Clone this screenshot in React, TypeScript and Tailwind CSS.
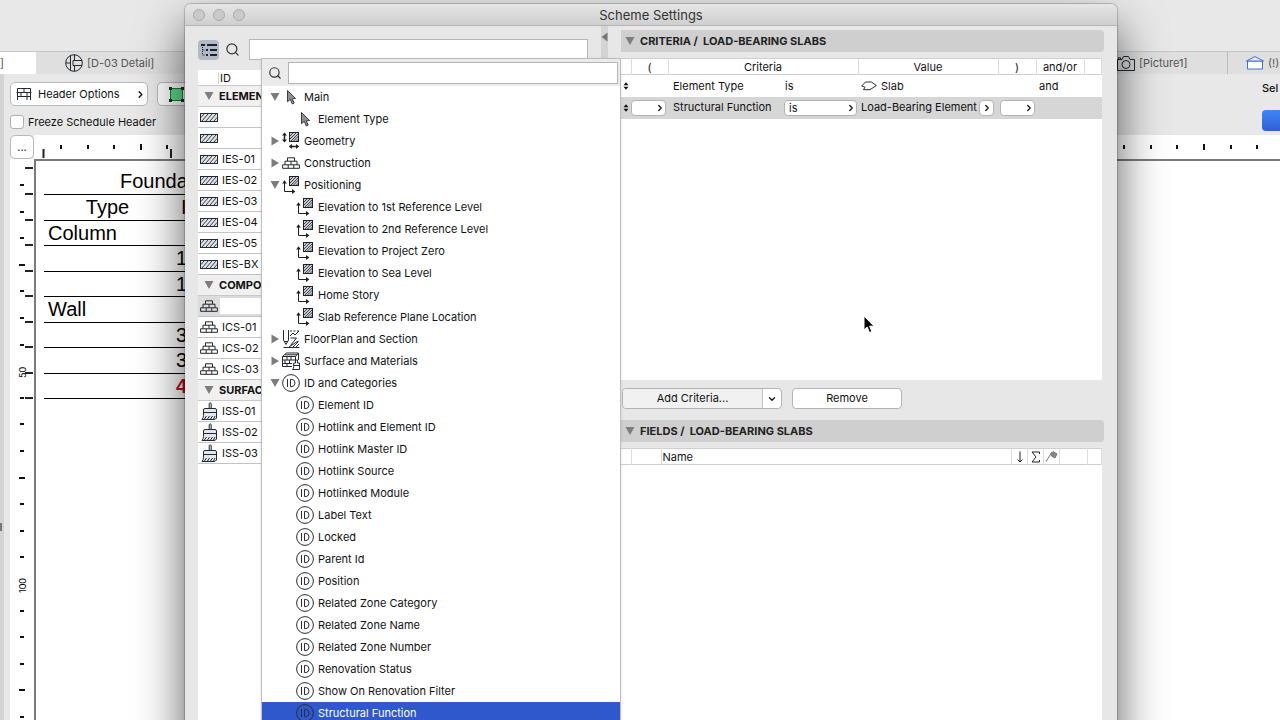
import type { ReactNode } from 'react';
import { ChevronDown, ChevronRight, Search } from 'lucide-react';

type IconName = 'cursor' | 'geometry' | 'bricks' | 'position' | 'section' | 'surface' | 'id';

type TreeNode = { label: string; icon: IconName; level: 0 | 1; open?: boolean; selected?: boolean };

const TREE: TreeNode[] = [
  { label: 'Main', icon: 'cursor', level: 0, open: true },
  { label: 'Element Type', icon: 'cursor', level: 1 },
  { label: 'Geometry', icon: 'geometry', level: 0, open: false },
  { label: 'Construction', icon: 'bricks', level: 0, open: false },
  { label: 'Positioning', icon: 'position', level: 0, open: true },
  { label: 'Elevation to 1st Reference Level', icon: 'position', level: 1 },
  { label: 'Elevation to 2nd Reference Level', icon: 'position', level: 1 },
  { label: 'Elevation to Project Zero', icon: 'position', level: 1 },
  { label: 'Elevation to Sea Level', icon: 'position', level: 1 },
  { label: 'Home Story', icon: 'position', level: 1 },
  { label: 'Slab Reference Plane Location', icon: 'position', level: 1 },
  { label: 'FloorPlan and Section', icon: 'section', level: 0, open: false },
  { label: 'Surface and Materials', icon: 'surface', level: 0, open: false },
  { label: 'ID and Categories', icon: 'id', level: 0, open: true },
  { label: 'Element ID', icon: 'id', level: 1 },
  { label: 'Hotlink and Element ID', icon: 'id', level: 1 },
  { label: 'Hotlink Master ID', icon: 'id', level: 1 },
  { label: 'Hotlink Source', icon: 'id', level: 1 },
  { label: 'Hotlinked Module', icon: 'id', level: 1 },
  { label: 'Label Text', icon: 'id', level: 1 },
  { label: 'Locked', icon: 'id', level: 1 },
  { label: 'Parent Id', icon: 'id', level: 1 },
  { label: 'Position', icon: 'id', level: 1 },
  { label: 'Related Zone Category', icon: 'id', level: 1 },
  { label: 'Related Zone Name', icon: 'id', level: 1 },
  { label: 'Related Zone Number', icon: 'id', level: 1 },
  { label: 'Renovation Status', icon: 'id', level: 1 },
  { label: 'Show On Renovation Filter', icon: 'id', level: 1 },
  { label: 'Structural Function', icon: 'id', level: 1, selected: true },
];

const SCHEMES = [
  { title: 'ELEMENTS', kind: 'hatch', rows: ['', '', 'IES-01', 'IES-02', 'IES-03', 'IES-04', 'IES-05', 'IES-BX'] },
  { title: 'COMPONENTS', kind: 'bricks', rows: ['', 'ICS-01', 'ICS-02', 'ICS-03'] },
  { title: 'SURFACES', kind: 'brush', rows: ['ISS-01', 'ISS-02', 'ISS-03'] },
];

const SCHEDULE = [
  { type: 'Column', value: '' },
  { type: '', value: '1' },
  { type: '', value: '1' },
  { type: 'Wall', value: '' },
  { type: '', value: '3' },
  { type: '', value: '3' },
  { type: '', value: '4', alert: true },
];

/* ---------- icons ---------- */

function Triangle({ open }: { open: boolean }) {
  return (
    <svg width="10" height="10" viewBox="0 0 10 10" fill="#7d7d7d" className="shrink-0">
      {open ? <path d="M0.5 1h9L5 9z" /> : <path d="M1.5 0.5v9L9 5z" />}
    </svg>
  );
}

function HatchIcon() {
  return (
    <svg width="18" height="9" viewBox="0 0 18 9" fill="#dfe3ea" stroke="#23272e" className="shrink-0">
      <rect x="0.5" y="0.5" width="17" height="8" />
      <path d="M2 8l6-7M6 8l6-7M10 8l6-7M1 4.500L4 1M14 8l3-3.500" strokeWidth="0.9" />
    </svg>
  );
}

function BricksIcon() {
  return (
    <svg width="18" height="12" viewBox="0 0 18 12" fill="none" stroke="#23272e" className="shrink-0">
      <path d="M5.5 4V0.8h7V4M3 7.7V4.2h12v3.5M0.6 11.3V7.8h16.8v3.5zM9 4.2v3.5M6.2 7.8v3.5M11.8 7.8v3.5" />
    </svg>
  );
}

function BrushIcon() {
  return (
    <svg width="17" height="18" viewBox="0 0 17 18" fill="#e3e6ec" stroke="#23272e" className="shrink-0">
      <path d="M8.2 6.5V1.5q1-1.4 2 0v5" />
      <path d="M2.5 9V8q0-1.5 1.5-1.5h10Q15.5 6.5 15.5 8v8q-1 1.500-2.500 1.500H1q1.500-1.500 1.500-4zM2.500 10.500h13" />
      <path d="M3.500 17l2-3M6.500 17l2-3M9.500 17l2-3M12.500 17l1.500-3" />
    </svg>
  );
}

function TreeIcon({ name }: { name: IconName }) {
  if (name === 'bricks') return <BricksIcon />;
  if (name === 'id') {
    return (
      <svg width="18" height="18" viewBox="0 0 18 18" fill="none" stroke="#2b2e36" className="shrink-0">
        <circle cx="9" cy="9" r="8.4" />
        <path d="M5.500 5v8M8.500 5.400v7.200h1.500q3-.4 3-3.600t-3-3.600z" />
      </svg>
    );
  }
  if (name === 'cursor') {
    return (
      <svg width="18" height="18" viewBox="0 0 18 18" fill="#8d8f93" stroke="#3a3d42" className="shrink-0">
        <path d="M5.500 2.500v11.200l2.800-2.300 2 4.600 1.900-.9-2-4.300 3.400-.3z" />
      </svg>
    );
  }
  if (name === 'geometry') {
    return (
      <svg width="18" height="18" viewBox="0 0 18 18" fill="none" stroke="#1c1f24" className="shrink-0">
        <rect x="7.500" y="0.500" width="9" height="9" fill="#c9ccd2" />
        <path d="M8 4l3-3M8 7l6-6M8.500 9.500l8-8M11 9.500l5.500-5.500M14 9.500l2.500-2.500" strokeWidth="0.8" />
        <path d="M2.500 2v7" strokeWidth="1.500" />
        <path d="M8 14.500h8" strokeWidth="1.500" />
        <path d="M0 3.500l2.500-3 2.500 3zM0 7.500l2.500 3 2.500-3zM10 12l-3.200 2.500 3.200 2.500zM14 12l3.200 2.500-3.200 2.500z" fill="#1c1f24" stroke="none" />
      </svg>
    );
  }
  if (name === 'position') {
    return (
      <svg width="18" height="18" viewBox="0 0 18 18" fill="none" stroke="#1c1f24" className="shrink-0">
        <rect x="7.500" y="0.500" width="9" height="9" fill="#c9ccd2" />
        <path d="M8 4l3-3M8 7l6-6M8.500 9.500l8-8M11 9.500l5.500-5.500M14 9.500l2.500-2.500" strokeWidth="0.8" />
        <path d="M2.500 6v9.500H11" />
        <path d="M0.200 7.500l2.300-3.200 2.300 3.200zM10 13l3.400 2.500L10 18z" fill="#1c1f24" stroke="none" />
      </svg>
    );
  }
  if (name === 'section') {
    return (
      <svg width="18" height="18" viewBox="0 0 18 18" fill="none" stroke="#23272e" className="shrink-0">
        <path d="M1.500 0v10l2.500 4.500 2.500-4.500V0M2 11.500h4" />
        <path d="M8 1h2M11.500 1h2M15 1h2M8 6l3-3 2 2 4-4M8.500 8h6l-6 7.500M1.500 17.500h16M7 17l9-6M11 17l5.500-5.500M14 17l3-3" />
      </svg>
    );
  }
  return (
    <svg width="18" height="18" viewBox="0 0 18 18" fill="none" stroke="#23272e" className="shrink-0">
      <path d="M0.500 4.500l4-3.500h12l-3 3.500zM0.500 4.500v10h9.500M13.500 4.500V8M16.500 1v7M0.500 8h13M0.500 11.500H10M5 4.500V8M9 4.500V8M3 8v3.500M7.500 8v3.500M5 11.500v3M3 2.800h12" />
      <path d="M13.500 11V8h2v3h2v6.500H10.500q1.200-1 1.200-3V11zM11.700 13.500h5.800" fill="#fff" />
    </svg>
  );
}

function SlabIcon() {
  return (
    <svg width="16" height="10" viewBox="0 0 16 10" fill="none" stroke="#2b2e36" className="shrink-0">
      <path d="M4.500 1h6l4.800 3.500L9 8.700H2.500L4 6.200.7 5z" />
    </svg>
  );
}

function DetailIcon() {
  return (
    <svg width="18" height="18" viewBox="0 0 18 18" fill="none" stroke="#23272e" className="shrink-0">
      <circle cx="9" cy="9" r="8.3" />
      <path d="M5.500 1.500v15M9.500 0.800v5.700M9.500 17.200v-5.700M17.200 6.500H8v5h9.200M1 9h4.500" />
    </svg>
  );
}

function CameraIcon() {
  return (
    <svg width="18" height="15" viewBox="0 0 18 15" fill="none" stroke="#23272e" className="shrink-0">
      <path d="M0.500 3.500h4.500l1.500-3h5l1.500 3h4.500v11H0.500z" />
      <circle cx="9" cy="8.500" r="4" />
      <path d="M1.500 3V1.800h2V3" />
    </svg>
  );
}

function HomeIcon() {
  return (
    <svg width="18" height="14" viewBox="0 0 18 14" fill="#fff" stroke="#3f6fd1" className="shrink-0">
      <path d="M1.500 5h15v8h-15z" />
      <path d="M0.500 5L9 0.600 17.500 5z" fill="#e8eefb" />
    </svg>
  );
}

function HeaderIcon() {
  return (
    <svg width="16" height="12" viewBox="0 0 16 12" fill="none" stroke="#23272e" className="shrink-0">
      <path d="M1.500 12V0.500h13V12M0.500 4.500h15M1.500 8.500h13M8 0.500v4M5 4.500v4M11 4.500V12" />
    </svg>
  );
}

function MarqueeIcon() {
  return (
    <svg width="15" height="15" viewBox="0 0 15 15" className="shrink-0">
      <rect x="1.500" y="1.500" width="12" height="12" fill="#5fdc8b" stroke="#1d7a3d" />
      <path d="M0 0h3v3H0zM12 0h3v3h-3zM0 12h3v3H0zM12 12h3v3h-3z" fill="#16331f" />
    </svg>
  );
}

function SchemeTreeIcon() {
  return (
    <svg width="18" height="16" viewBox="0 0 18 16" fill="none" stroke="#1b2233" className="shrink-0">
      <path d="M1 3h4M7 3h10M6 8h2M10 8h7M6 13h2M10 13h7" strokeWidth="2" />
      <path d="M2.500 5v8H5M2.500 8H5" strokeDasharray="1 1" />
    </svg>
  );
}

function SortHandle() {
  return (
    <svg width="6" height="8" viewBox="0 0 6 8" fill="#111" className="mx-auto">
      <path d="M0.500 3.200L3 0.300l2.500 2.900zM0.500 4.800L3 7.700l2.500-2.900z" />
    </svg>
  );
}

/* ---------- rulers ---------- */

function HorizontalRuler() {
  const ticks = Array.from({ length: 80 }, (_, k) => ({ x: Math.round(26 + k * 26.58), major: k % 5 === 3 }));
  return (
    <svg width="100%" height="24" className="block flex-1 bg-white">
      <path d="M9.500 14v9M137 14v9" stroke="#222" strokeWidth="2" />
      {ticks.map((t) => (
        <rect key={t.x} x={t.x} y={t.major ? 9 : 10} width="2" height={t.major ? 6 : 4} fill="#111" />
      ))}
    </svg>
  );
}

function VerticalRuler() {
  const ticks = Array.from({ length: 40 }, (_, k) => ({ k, y: Math.round(25 + k * 26.6) }));
  const majors = [3, 11, 19, 27];
  const labelled = [7, 15];
  return (
    <svg width="24" height="100%" className="block h-full shrink-0 bg-white">
      {[8, 34, 60, 85, 111, 136, 162, 187, 213, 238].map((y) => (
        <rect key={y} x="15" y={y} width="8" height="2" fill="#222" />
      ))}
      {ticks
        .filter((t) => !labelled.includes(t.k))
        .map((t) => (
          <rect
            key={t.k}
            x={majors.includes(t.k) ? 9 : 10}
            y={t.y}
            width={majors.includes(t.k) ? 6 : 4}
            height="2"
            fill="#111"
          />
        ))}
      <text transform="translate(16 219) rotate(-90)" className="font-['Inter'] text-[9px]">
        50
      </text>
      <text transform="translate(16 434) rotate(-90)" className="font-['Inter'] text-[9px]">
        100
      </text>
    </svg>
  );
}

/* ---------- shared controls ---------- */

function MiniSelect({ label, value, className }: { label: string; value: string; className: string }) {
  return (
    <div className={`relative ${className}`}>
      <select
        aria-label={label}
        className="block h-4 w-full appearance-none rounded border border-[#b4b4b4] bg-white pl-1 text-[11px] leading-[14px]"
      >
        <option>{value}</option>
      </select>
      <ChevronRight size={10} strokeWidth={3} className="pointer-events-none absolute top-[3px] right-px" />
    </div>
  );
}

function SectionHeader({ children }: { children: ReactNode }) {
  return (
    <h2 className="flex h-[22px] shrink-0 items-center gap-[5px] rounded-r bg-[#cfcfcf] pl-1 text-[11px] font-bold whitespace-pre text-[#222]">
      <Triangle open />
      {children}
    </h2>
  );
}

/* ---------- document window behind the dialog ---------- */

function DocumentWindow() {
  return (
    <main className="flex h-full flex-col">
      <nav className="mt-[51px] flex h-[23px] shrink-0 border-t border-[#c6c6c6] bg-[#dfdfdf] text-[11px] text-[#555]">
        <a href="#plan" className="flex w-9 items-center bg-white">
          ]
        </a>
        <a href="#detail" className="flex items-center gap-1 pl-[29px]">
          <DetailIcon />
          [D-03 Detail]
        </a>
        <a href="#picture" className="ml-auto flex w-[111px] items-center gap-1 border-r border-[#bcbcbc]">
          <CameraIcon />
          [Picture1]
        </a>
        <a href="#model" className="flex w-[52px] items-center gap-1 pl-[18px]">
          <HomeIcon />
          (!)
        </a>
      </nav>

      <div className="flex min-h-0 flex-1">
        <div className="flex w-1 shrink-0 items-center bg-[#d4d4d4] pt-[260px]">
          <span className="h-2 w-0.5 bg-[#777]" />
        </div>
        <div className="flex min-w-0 flex-1 flex-col pl-1.5">
          <div className="flex h-[61px] shrink-0 justify-between pt-2">
            <div>
              <div className="flex gap-[9px]">
                <button className="flex h-6 w-[138px] items-center gap-1.5 rounded-[5px] border border-[#b9b9b9] bg-white pl-[5px] text-[11px]">
                  <HeaderIcon />
                  Header Options
                  <ChevronRight size={11} strokeWidth={3} className="mr-px ml-auto" />
                </button>
                <button
                  aria-label="Selection marquee"
                  className="flex h-6 w-20 items-center rounded-[5px] border border-[#b9b9b9] bg-white pl-[11px]"
                >
                  <MarqueeIcon />
                </button>
              </div>
              <label className="mt-2 flex h-4 items-center gap-1 text-[11px]">
                <input
                  type="checkbox"
                  className="size-3.5 appearance-none rounded-[3px] border border-[#b0b0b0] bg-white"
                />
                Freeze Schedule Header
              </label>
            </div>
            <div className="w-[18px] overflow-hidden text-[11px] font-medium">
              <div className="h-7 leading-3 whitespace-nowrap">Sel</div>
              <button
                aria-label="Select"
                className="block h-[21px] w-20 rounded bg-linear-to-b from-[#4285f5] to-[#2f5fd8]"
              />
            </div>
          </div>
          <div className="flex h-6 shrink-0">
            <button className="w-6 rounded-[5px] border border-[#b9b9b9] bg-white text-[11px]">...</button>
            <HorizontalRuler />
          </div>
          <div className="flex min-h-0 flex-1">
            <VerticalRuler />
            <div className="min-w-0 flex-1 border-t-2 border-l-2 border-[#7b7b7b] bg-white">
              <table className="ml-2 w-[300px] table-fixed border-collapse font-['Liberation_Sans',sans-serif] text-xl leading-5 text-black">
                <colgroup>
                  <col className="w-[127px]" />
                  <col />
                </colgroup>
                <thead>
                  <tr className="h-[33px] border-b border-black">
                    <th colSpan={2} className="pt-2 pl-[76px] text-left font-normal">
                      Foundation
                    </th>
                  </tr>
                  <tr className="h-[26px] border-b border-black">
                    <th className="font-normal">Type</th>
                    <th className="pl-2.5 text-left font-normal">ID</th>
                  </tr>
                </thead>
                <tbody>
                  {SCHEDULE.map((row, i) => (
                    <tr key={i} className="border-b border-black odd:h-[25px] even:h-[26px]">
                      <td className="pl-1">{row.type}</td>
                      <td className={row.alert ? 'pl-[5px] font-bold text-[#c00d1a]' : 'pl-[5px]'}>{row.value}</td>
                    </tr>
                  ))}
                </tbody>
              </table>
            </div>
          </div>
        </div>
      </div>
    </main>
  );
}

/* ---------- dialog ---------- */

function SchemeList() {
  return (
    <div className="mt-2.5 min-h-0 flex-1 overflow-hidden bg-white text-[11px]">
      <div className="flex h-4 items-center border-b border-[#c9c9c9] pl-5">
        <span className="border-l border-[#d5d5d5] pl-px leading-3">ID</span>
      </div>
      {SCHEMES.map((group) => (
        <section key={group.title}>
          <h3 className="flex h-[21px] items-center gap-[5px] border-b border-[#c9c9c9] bg-[#f0f0f0] pl-1.5 font-bold">
            <Triangle open />
            {group.title}
          </h3>
          <ul>
            {group.rows.map((row, i) => (
              <li
                key={i}
                className={`flex h-[21px] items-center gap-1 border-b border-[#c4c4c4] pl-0.5 ${
                  group.kind === 'bricks' && i === 0 ? 'bg-[#dcdcdc]' : ''
                }`}
              >
                {group.kind === 'hatch' && <HatchIcon />}
                {group.kind === 'bricks' && <BricksIcon />}
                {group.kind === 'brush' && (
                  <span className="flex w-[18px] justify-end">
                    <BrushIcon />
                  </span>
                )}
                {group.kind === 'bricks' && i === 0 ? <span className="-ml-0.5 h-4 flex-1 bg-white" /> : row}
              </li>
            ))}
          </ul>
        </section>
      ))}
    </div>
  );
}

function CriteriaTable() {
  return (
    <table className="w-full table-fixed border-collapse text-[11px]">
      <colgroup>
        <col className="w-2.5" />
        <col className="w-[37px]" />
        <col className="w-[190px]" />
        <col className="w-[140px]" />
        <col className="w-[38px]" />
        <col className="w-12" />
        <col />
      </colgroup>
      <thead>
        <tr className="h-4 border-y border-[#cfcfcf]">
          {['', '(', 'Criteria', 'Value', ')', 'and/or', ''].map((head, i) => (
            <th key={i} className="border-r border-[#dcdcdc] font-normal leading-[14px]">
              {head}
            </th>
          ))}
        </tr>
      </thead>
      <tbody>
        <tr className="h-[22px]">
          <td>
            <SortHandle />
          </td>
          <td />
          <td className="pl-[5px]">
            <div className="flex">
              <span className="w-[112px]">Element Type</span>
              <span>is</span>
            </div>
          </td>
          <td className="pl-[3px]">
            <div className="flex items-center gap-1">
              <SlabIcon />
              Slab
            </div>
          </td>
          <td />
          <td className="pl-[3px]">and</td>
          <td />
        </tr>
        <tr className="h-[22px] bg-[#d6d6d6]">
          <td>
            <SortHandle />
          </td>
          <td>
            <MiniSelect label="Opening bracket" value="" className="w-[35px]" />
          </td>
          <td className="pl-[5px]">
            <div className="flex items-center">
              <span className="w-[111px] whitespace-nowrap">Structural Function</span>
              <MiniSelect label="Operator" value="is" className="w-[73px]" />
            </div>
          </td>
          <td className="pl-[3px]">
            <div className="flex items-center justify-between pr-1 whitespace-nowrap">
              Load-Bearing Element
              <button
                aria-label="Choose value"
                className="grid h-4 w-[15px] place-items-center rounded border border-[#b4b4b4] bg-white"
              >
                <ChevronRight size={10} strokeWidth={3} />
              </button>
            </div>
          </td>
          <td className="pl-0.5">
            <MiniSelect label="Closing bracket" value="" className="w-[35px]" />
          </td>
          <td />
          <td />
        </tr>
      </tbody>
    </table>
  );
}

function FieldsTable() {
  return (
    <table className="w-full table-fixed border-collapse text-[11px]">
      <thead>
        <tr className="h-4 border-y border-[#cfcfcf] [&>th]:border-r [&>th]:border-[#dcdcdc] [&>th]:leading-[14px] [&>th]:font-normal">
          <th className="w-2.5" />
          <th className="w-[30px]" />
          <th className="pl-px text-left">Name</th>
          <th className="w-4" aria-label="Sort">
            <svg width="8" height="12" viewBox="0 0 8 12" fill="none" stroke="#222" className="mx-auto">
              <path d="M4 0.500v10.500M1.500 8.500L4 11l2.500-2.500" />
            </svg>
          </th>
          <th className="w-4" aria-label="Total">
            <svg width="9" height="12" viewBox="0 0 9 12" fill="none" stroke="#222" className="mx-auto">
              <path d="M8.500 3V1H1l4 5-4 5h7.500V9" />
            </svg>
          </th>
          <th className="w-4" aria-label="Flag">
            <svg width="13" height="11" viewBox="0 0 13 11" fill="#85878c" stroke="#777" className="mx-auto">
              <path d="M1 10.500L7 1M6 2.500L8 0.500l4 2.500-2 4-3.500-2z" />
            </svg>
          </th>
          <th className="w-7" />
          <th className="w-3.5" />
        </tr>
      </thead>
    </table>
  );
}

function CriteriaPicker() {
  return (
    <div className="absolute top-[54px] -bottom-1 left-[76px] w-[360px] overflow-hidden border border-[#bdbdbd] bg-white text-[11px] shadow-sm">
      <div className="flex h-[27px] items-center gap-1.5 bg-[#ebebeb] pr-0.5 pl-1.5">
        <Search size={14} strokeWidth={2} className="shrink-0 text-[#333]" />
        <input aria-label="Search criteria" className="h-[22px] min-w-0 flex-1 border border-[#b5b5b5] bg-white px-1" />
      </div>
      <ul>
        {TREE.map((node) => (
          <li
            key={node.label}
            className={`flex h-[22px] items-center gap-1 ${node.level ? 'pl-[34px]' : 'pl-2'} ${
              node.selected ? 'bg-[#2f58cd] text-white' : ''
            }`}
          >
            {node.level === 0 && (
              <span className="-mr-1 w-3 shrink-0">
                <Triangle open={!!node.open} />
              </span>
            )}
            <TreeIcon name={node.icon} />
            {node.label}
          </li>
        ))}
      </ul>
    </div>
  );
}

function SchemeDialog() {
  return (
    <div
      role="dialog"
      aria-labelledby="dialog-title"
      className="absolute top-1 right-[163px] -bottom-40 left-[185px] flex flex-col rounded-t-md bg-[#e7e7e7] shadow-[0_24px_48px_rgba(0,0,0,0.65),0_0_1px_1px_rgba(0,0,0,0.2)]"
    >
      <header className="flex h-[22px] shrink-0 items-center rounded-t-md border-b border-[#b3b3b3] bg-linear-to-b from-[#e6e6e6] to-[#cfcfcf] px-2">
        <div className="flex w-20 gap-2">
          {['Close', 'Minimize', 'Zoom'].map((name) => (
            <button key={name} aria-label={name} className="size-3 rounded-full border border-[#aaa] bg-[#cacaca]" />
          ))}
        </div>
        <h1 id="dialog-title" className="flex-1 text-center text-[13px] leading-4 text-[#333]">
          Scheme Settings
        </h1>
        <div className="w-20" />
      </header>

      <div className="flex min-h-0 flex-1">
        <div className="flex w-[403px] shrink-0 flex-col pt-[13px] pl-[13px]">
          <div className="flex h-[21px] items-center">
            <button aria-label="Tree view" className="grid h-5 w-[21px] place-items-center rounded bg-[#b5b9c4]">
              <SchemeTreeIcon />
            </button>
            <Search size={15} strokeWidth={2} className="mr-[9px] ml-1.5 text-[#333]" />
            <input aria-label="Search schemes" className="h-[21px] min-w-0 flex-1 border border-[#b5b5b5] bg-white px-1" />
          </div>
          <SchemeList />
        </div>
        <div className="ml-[13px] w-[7px] shrink-0 bg-[#d4d4d4] pt-1.5">
          <svg width="7" height="10" viewBox="0 0 7 10" fill="#777">
            <path d="M6.500 0.500v9L0.500 5z" />
          </svg>
        </div>

        <div className="ml-[13px] flex min-w-0 flex-1 flex-col pt-1 pr-[13px]">
          <SectionHeader>CRITERIA /  LOAD-BEARING SLABS</SectionHeader>
          <div className="mt-1.5 mr-0.5 h-[322px] shrink-0 bg-white">
            <CriteriaTable />
          </div>
          <div className="mt-2 mb-[11px] ml-px flex h-[21px] shrink-0 gap-2.5 text-[11px]">
            <div className="flex w-[160px] rounded border border-[#b4b4b4] bg-white">
              <button className="flex-1 rounded-l bg-[#f1f1f1]">Add Criteria...</button>
              <button aria-label="More criteria" className="grid w-[19px] place-items-center border-l border-[#c4c4c4]">
                <ChevronDown size={10} strokeWidth={3} />
              </button>
            </div>
            <button className="w-[110px] rounded border border-[#b4b4b4] bg-white">Remove</button>
          </div>
          <SectionHeader>FIELDS /  LOAD-BEARING SLABS</SectionHeader>
          <div className="mt-1.5 mr-0.5 flex-1 bg-white">
            <FieldsTable />
          </div>
        </div>
      </div>

      <CriteriaPicker />
    </div>
  );
}

export default function App() {
  return (
    <div className="relative h-screen overflow-hidden bg-[#e8e8e8] font-['Inter','Liberation_Sans',sans-serif] text-[#111]">
      <DocumentWindow />
      <SchemeDialog />
      {/* mouse pointer */}
      <svg width="13" height="19" viewBox="0 0 13 19" className="pointer-events-none absolute top-[315px] left-[863px]">
        <path d="M1 1v14l3.200-3 2.300 5.500 2.400-1-2.300-5.300H11z" fill="#000" stroke="#fff" />
      </svg>
    </div>
  );
}
